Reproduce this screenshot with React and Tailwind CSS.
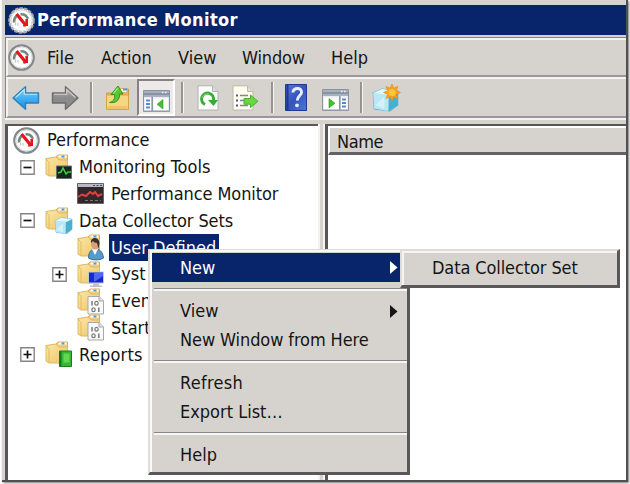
import React from "react";

const Gauge = ({ size = 27, dark }) => (
  <svg width={size} height={size} viewBox="0 0 27 27" className="shrink-0">
    <circle cx="13.5" cy="13.5" r="12.2" fill="#fafafa" stroke={dark ? "#a9acae" : "#85888a"} strokeWidth="2.2" strokeDasharray={dark ? "3.4 1.2" : undefined} />
    <circle cx="13.5" cy="13.5" r="10.6" fill="#fdfdfd" stroke="#d5d7d8" strokeWidth="1" />
    <path d="M6 15.500A7.500 7.500 0 0 1 8.500 9M12.500 7.300a7.500 7.500 0 0 1 7.500 4.500" fill="none" stroke="#6f8a7c" strokeWidth="2.400" />
    <path d="M7.500 15.500v3M10 16v2.500" stroke="#c3c8c6" strokeWidth="1.200" />
    <path d="M8.500 7 18 18.500" stroke="#e6141c" strokeWidth="3.200" />
    <path d="M18.700 12v7M16.500 17.500v2" stroke="#e6141c" strokeWidth="2.600" />
  </svg>
);

const Arrow = ({ right }) => (
  <svg width="28" height="26" viewBox="0 0 28 26" className="shrink-0">
    <defs>
      <linearGradient id={right ? "ar" : "al"} x1="0" y1="0" x2="0" y2="1">
        <stop offset="0" stopColor={right ? "#b5b5b5" : "#8ed7fb"} />
        <stop offset=".5" stopColor={right ? "#8b8b8b" : "#43b0f2"} />
        <stop offset="1" stopColor={right ? "#8a8a8a" : "#198fe0"} />
      </linearGradient>
    </defs>
    <g transform={right ? "translate(28 0) scale(-1 1)" : undefined}>
      <path d="M1 13 13.500 1.800V8H26.500v10H13.500v6.200Z" fill={right ? "url(#ar)" : "url(#al)"} stroke={right ? "#6c6c6c" : "#2f7fb8"} strokeWidth="1.400" strokeLinejoin="round" />
      <path d="M3.500 12.500 12.300 4.500V9.300H25" fill="none" stroke={right ? "#cfcfcf" : "#b4e7ff"} strokeWidth="1.100" />
    </g>
  </svg>
);

const FolderUp = () => (
  <svg width="25" height="26" viewBox="0 0 25 26" className="shrink-0">
    <path d="M1.500 8h8l3-4h11v20h-22Z" fill="#e8bb55" stroke="#c99c3f" />
    <path d="M14 3.500h8v4h-8z" fill="#fff" stroke="#d8b267" />
    <path d="M18 4.500h4" stroke="#4b9be5" strokeWidth="2" />
    <path d="M1.500 10h22v14.500h-22Z" fill="#f6d781" stroke="#d3a64a" />
    <path d="M2.500 21h20v3h-20z" fill="#edc466" />
    <path d="M4.500 17.500c4.500-1 5.500-4 5-8H6L13 1l5 8h-3.500c.5 5.500-3 9.500-10 8.500Z" fill="#58c735" stroke="#32961d" />
    <path d="M8.500 8.300 13 2.800" stroke="#a6ec82" strokeWidth="1.200" />
  </svg>
);

const Panel = ({ flip }) => (
  <svg width="27" height="22" viewBox="0 0 27 22" className="shrink-0">
    <path d="M.5.5h26v21H.5z" fill="#e9edf2" stroke="#8b939f" />
    <path d="M1 1h25v6H1z" fill="#a9b1c0" />
    <path d="M1 4h25" stroke="#747f93" strokeWidth="1.200" />
    <path d="M19 2.500h1.500M22 2.500h1.500" stroke="#eef2f8" strokeWidth="1.500" />
    <g transform={flip ? "translate(27 0) scale(-1 1)" : undefined}>
      <path d="M2 8.500h6v11.500H2zM10.500 8.500H25v11.500H10.500z" fill="#fff" />
      <path d="M9.200 7v14" stroke="#8490a6" strokeWidth="1.500" />
      <path d="M3 10.500h4M3 14h4M3 17.500h4" stroke="#5587cf" strokeWidth="1.800" />
      <path d="M20 9.500v9.500l-6-4.750Z" fill="#45bf30" stroke="#2d9e20" strokeWidth=".6" />
    </g>
    <path d="M1 21h25" stroke="#9ba4b3" />
  </svg>
);

const RefreshPage = () => (
  <svg width="22" height="26" viewBox="0 0 22 26" className="shrink-0">
    <path d="M1 .8h14.500L21 6.500V25H1Z" fill="#fcfcfc" stroke="#b0b3b4" />
    <path d="M15.500 1v5.500H21" fill="#d8dcde" stroke="#b0b3b4" />
    <path d="M8 19.500a6 6 0 1 1 8.500-4.500" fill="none" stroke="#36ad35" strokeWidth="3" />
    <path d="M11 15h10l-4.500 6Z" fill="#35ad34" />
    <path d="M5 13a6 6 0 0 1 7-4" fill="none" stroke="#73d566" />
  </svg>
);

const ExportPage = () => (
  <svg width="27" height="26" viewBox="0 0 27 26" className="shrink-0">
    <path d="M1 .8h14.500L21 6.500V25H1Z" fill="#fffdee" stroke="#b9b8a9" />
    <path d="M15.500 1v5.500H21" fill="#dedccb" stroke="#b9b8a9" />
    <path d="M4 10.500h2M4 15.500h2M4 20.500h2" stroke="#535788" strokeWidth="1.800" />
    <path d="M8 10.500h8M8 15.500h5M8 20.500h8" stroke="#8382a3" strokeWidth="1.300" />
    <path d="M12 13.500h6.500V10l7.500 6.300-7.500 6.200v-3.300H12Z" fill="#69d642" stroke="#42b627" />
  </svg>
);

const HelpBook = () => (
  <svg width="22" height="27" viewBox="0 0 22 27" className="shrink-0">
    <defs>
      <linearGradient id="hb" x1="0" y1="0" x2="1" y2="1">
        <stop offset="0" stopColor="#5a78d8" /><stop offset=".5" stopColor="#3554bd" /><stop offset="1" stopColor="#4b76d9" />
      </linearGradient>
    </defs>
    <path d="M.5.5h21v26H.5z" fill="url(#hb)" stroke="#203797" />
    <path d="M2.500 1v25" stroke="#1d3591" strokeWidth="2" />
    <path d="M8 8.500c0-5.500 9-5.500 8.500 0-.2 3-4.200 3.500-4.200 8" fill="none" stroke="#e6edff" strokeWidth="3" />
    <circle cx="12" cy="21.300" r="1.900" fill="#e6edff" />
  </svg>
);

const CubeShape = () => (
  <g>
    <path d="M1 7 9 3l14 2v14l-7 6-14-2Z" fill="#8cd4ea" stroke="#65b2d2" strokeLinejoin="round" />
    <path d="M1 7l14 2-1 16L2 22.500Z" fill="#b9e7f5" />
    <path d="M15 9l8-4v14l-8 6Z" fill="#49aecf" />
    <path d="M1 7 9 3l14 2-8 4Z" fill="#e2f7fc" />
    <path d="M3 19l8-8v12Z" fill="#e0f5fb" opacity=".7" />
  </g>
);

const NewCube = () => (
  <svg width="29" height="28" viewBox="0 0 29 28" className="shrink-0">
    <g transform="translate(0 2) scale(1.12 1)"><CubeShape /></g>
    <path d="m20 0 1.700 4.300L26 2.300l-1.800 4.300 4.300 1.900-4.300 1.800 1.800 4.200-4.300-1.800L20 17l-1.800-4.300-4.300 1.800 1.900-4.200-4.300-1.800 4.300-1.900-1.900-4.300 4.300 2Z" fill="#f5a51c" stroke="#e88e16" strokeWidth=".7" />
    <circle cx="20" cy="8.500" r="3.500" fill="#ffc438" />
  </svg>
);

const Folder = ({ kind }) => (
  <svg width="28" height="27" viewBox="0 0 28 27" className="shrink-0">
    <defs>
      <linearGradient id="fo" x1="0" y1="0" x2="1" y2="1">
        <stop offset="0" stopColor="#fbe7a7" /><stop offset="1" stopColor="#eec462" />
      </linearGradient>
    </defs>
    <path d="M10 4 13 1h9.500v20H10Z" fill="#f0cf7d" stroke="#d9ad55" />
    <path d="M13.500 2.500h8" stroke="#fff" strokeWidth="2" />
    <path d="M16.500 2.500h3" stroke="#4499e8" strokeWidth="2" />
    <path d="M1 4.500 11 3l3 3h8.500v16H4L1 20Z" fill="url(#fo)" stroke="#dfb866" />
    <path d="M4 22V8.500L1 4.500" fill="none" stroke="#e6bb5f" />
    {kind === "tools" && <g><path d="M11.500 12h15v12.500h-15z" fill="#17251c" stroke="#667068" /><path d="m13 19 3-1 2-4 3 6 2-2h3" fill="none" stroke="#36d341" strokeWidth="1.600" /></g>}
    {kind === "cube" && <g transform="translate(9.500 8.500) scale(.76 .73)"><CubeShape /></g>}
    {kind === "user" && <g><path d="M11.500 24c0-6 3-9 6-9 5 0 8 2 9 9-4 2.500-11 2.500-15 0Z" fill="#579bc9" stroke="#356e9b" /><path d="m15 15 3 6 3-6Z" fill="#fff" /><ellipse cx="18" cy="10" rx="4" ry="5.500" fill="#d5a27c" /><path d="M14 9c-1-6 8-7 8.500 0l-1 6-1.500-6c-2 0-3-1-4-2Z" fill="#3c302b" /></g>}
    {kind === "system" && <g><path d="M11.500 11h15v11h-15z" fill="#1629cf" stroke="#c5cad9" /><path d="M17 11.500h9V15l-9 6Z" fill="#647df0" opacity=".75" /><path d="M16 22.500h6v2h3v1.500H13v-1.500h3Z" fill="#bfc3c7" /></g>}
    {kind === "data" && <g><path d="M11 8.500h11l4.500 4.500v13H11Z" fill="#fafafa" stroke="#a8a8a8" /><path d="M22 8.500V13h4.500" fill="#ddd" stroke="#aaa" /><path d="M15 13v4.500M21.800 19.500v4.500" stroke="#707070" strokeWidth="1.400" /><ellipse cx="19.500" cy="15.300" rx="1.700" ry="1.900" fill="none" stroke="#777" strokeWidth="1.200" /><ellipse cx="16.500" cy="21.700" rx="1.700" ry="1.900" fill="none" stroke="#777" strokeWidth="1.200" /></g>}
    {kind === "report" && <g><path d="M14.500 10h12v15.500h-12z" fill="#34b833" stroke="#197d20" /><path d="M15.500 10.500v14.500" stroke="#117a20" strokeWidth="2" /><path d="M18.500 12.500h6v9h-6z" fill="#63d652" /></g>}
  </svg>
);

const Monitor = () => (
  <svg width="27" height="21" viewBox="0 0 27 21" className="shrink-0">
    <path d="M.5.5h26v20H.5z" fill="#30282a" stroke="#686367" />
    <path d="M1 1h25v3H1z" fill="#b9b9c3" />
    <path d="M16 2.500h2m1.500 0h2m1.500 0h2" stroke="#44516d" />
    <path d="M1 14 5 11.500l4 1.500 4-4 3 2 2-2 3 4 4-2" fill="none" stroke="#e43e43" strokeWidth="2" />
    <path d="M8 17.500h16" stroke="#777" strokeDasharray="3 2" />
  </svg>
);

const Expander = ({ plus }) => (
  <svg width="15" height="15" viewBox="0 0 15 15" className="shrink-0">
    <path d="M.8.8h13.400v13.400H.8z" fill="#fff" stroke="#858585" strokeWidth="1.400" />
    <path d={plus ? "M3.500 7.500h8M7.500 3.500v8" : "M3.500 7.500h8"} stroke="#111" strokeWidth="1.700" />
  </svg>
);

const Divider = () => <div className="h-[31px] w-[3px] shrink-0 border-l-2 border-r border-l-[#97948f] border-r-[#f5f4f1]" />;

const Row = ({ pad, box, children }) => (
  <div className={`flex h-[26.8px] items-center ${pad}`}>
    {box && <Expander plus={box === "plus"} />}
    {children}
  </div>
);

const Item = ({ label, arrow, active, spacing = "" }) => (
  <div className={`mr-[4px] flex items-center justify-between pl-[28px] pr-[5px] ${active ? "h-[29px] bg-[#08246b] text-white" : "h-[28.5px]"}`}>
    <span className={spacing}>{label}</span>
    {arrow && <svg width="8" height="13" viewBox="0 0 8 13"><path d="M0 0v13l7.500-6.500Z" fill="currentColor" /></svg>}
  </div>
);

const Sep = () => <div className="my-[6px] ml-[2px] h-[3px] border-b-2 border-t border-b-[#f7f6f4] border-t-[#89868a]" />;

export default function App() {
  return (
    <div className="relative h-[484px] w-[630px] overflow-hidden bg-white font-['DejaVu_Sans_Condensed','DejaVu_Sans',sans-serif] text-[18px] leading-none text-[#151515] [font-stretch:condensed] whitespace-nowrap">
      <div className="ml-[2px] flex h-[482px] w-[626px] flex-col border-b-2 border-r-2 border-b-[#505052] border-r-[#505052] bg-[#d6d3ce] pl-[3px] pt-[5px] shadow-[1px_1px_2px_#777]">
        <header className="flex h-[30px] shrink-0 items-center bg-[#08246b] pl-[3px] font-bold text-white">
          <Gauge dark />
          <span className="ml-[2px] tracking-[0.38px]">Performance Monitor</span>
        </header>
        <div className="mt-[2px] flex h-[81px] shrink-0 flex-col border-l border-t border-[#858284]">
          <nav className="flex h-[39px] shrink-0 items-center border-b-2 border-l-2 border-t-2 border-b-[#98979a] border-l-[#f4f3f0] border-t-[#f4f3f0]">
            <Gauge />
            <span className="ml-[12px] w-[54px]">File</span>
            <span className="w-[77px]">Action</span>
            <span className="w-[64px]">View</span>
            <span className="w-[89px] tracking-[-0.15px]">Window</span>
            <span>Help</span>
          </nav>
          <div className="flex h-[41px] shrink-0 items-center border-b-2 border-l-2 border-t-2 border-b-[#99979a] border-l-[#f4f3f0] border-t-[#f4f3f0] pl-[4px]">
            <Arrow />
            <div className="w-[11px]" />
            <Arrow right />
            <div className="w-[11px]" />
            <Divider />
            <div className="w-[12px]" />
            <FolderUp />
            <div className="ml-[7px] mr-[6px] flex h-[37px] w-[38px] items-center justify-center border-2 border-b-white border-l-[#858286] border-r-white border-t-[#858286] bg-[#ecebe9] pt-[6px]"><Panel /></div>
            <Divider />
            <div className="w-[13px]" />
            <RefreshPage />
            <div className="w-[13px]" />
            <ExportPage />
            <div className="w-[12px]" />
            <Divider />
            <div className="w-[11px]" />
            <HelpBook />
            <div className="w-[15px]" />
            <div className="pt-[4px]"><Panel flip /></div>
            <div className="w-[11px]" />
            <Divider />
            <div className="w-[9px]" />
            <NewCube />
          </div>
        </div>
        <main className="flex min-h-0 flex-1 border-t-2 border-t-[#f4f3f0] pt-[4px]">
          <section className="w-[313px] shrink-0 border-l-[3px] border-t-2 border-[#59565a] bg-white pt-[1px]">
            <Row pad="pl-[5px]"><Gauge /><span className="ml-[7px]">Performance</span></Row>
            <Row pad="pl-[12px]" box="minus"><div className="w-[10px]" /><Folder kind="tools" /><span className="ml-[6px]">Monitoring Tools</span></Row>
            <Row pad="pl-[69px]"><Monitor /><span className="ml-[7px] tracking-[-0.1px]">Performance Monitor</span></Row>
            <Row pad="pl-[12px]" box="minus"><div className="w-[10px]" /><Folder kind="cube" /><span className="ml-[6px] tracking-[-0.1px]">Data Collector Sets</span></Row>
            <Row pad="pl-[69px]"><Folder kind="user" /><span className="ml-[4px] flex h-[27px] w-[110px] items-center bg-[#08246b] px-[2px] text-white">User Defined</span></Row>
            <Row pad="pl-[44px]" box="plus"><div className="w-[10px]" /><Folder kind="system" /><span className="ml-[6px]">Syst</span></Row>
            <Row pad="pl-[69px]"><Folder kind="data" /><span className="ml-[6px] h-[20px] w-[37px] overflow-hidden leading-[20px]">Even</span></Row>
            <Row pad="pl-[69px]"><Folder kind="data" /><span className="ml-[6px] h-[20px] w-[37px] overflow-hidden leading-[20px]">Start</span></Row>
            <Row pad="pl-[12px]" box="plus"><div className="w-[10px]" /><Folder kind="report" /><span className="ml-[6px] tracking-[0.25px]">Reports</span></Row>
          </section>
          <div className="w-[7px] shrink-0 border-x-2 border-[#f4f3f0] bg-[#d6d3ce]" />
          <section className="min-w-0 flex-1 border-l-[3px] border-t-2 border-[#59565a] bg-white">
            <div className="flex h-[29px] items-center border-b-[3px] border-l-2 border-t-2 border-b-[#656266] border-l-white border-t-white bg-[#d6d3ce] pl-[7px] pt-[3px] tracking-[-0.4px]">Name</div>
          </section>
        </main>
      </div>

      <div className="absolute left-[148px] top-[249px] h-[226px] w-[262px] border-b-[3px] border-l-2 border-r-[3px] border-t-2 border-b-[#59575a] border-l-[#dedcd8] border-r-[#59575a] border-t-[#dedcd8] bg-[#d6d3ce]">
        <div className="-mt-px h-[calc(100%+1px)] border-l-2 border-t-2 border-[#faf9f7] pt-[1px]">
          <Item label="New" arrow active />
          <Sep />
          <Item label="View" arrow />
          <Item label="New Window from Here" spacing="tracking-[-0.1px]" />
          <Sep />
          <Item label="Refresh" spacing="tracking-[0.3px]" />
          <Item label="Export List…" />
          <Sep />
          <Item label="Help" />
        </div>
      </div>
      <div className="absolute left-[400px] top-[249px] flex h-[39px] w-[220px] items-center border-b-[3px] border-l-2 border-r-[3px] border-t-2 border-b-[#59575a] border-l-[#dedcd8] border-r-[#59575a] border-t-[#dedcd8] bg-[#d6d3ce]">
        <div className="flex h-full w-full items-center border-l-2 border-t-2 border-[#f6f5f2] pb-[2px] pl-[28px] tracking-[-0.1px]">Data Collector Set</div>
      </div>
    </div>
  );
}
